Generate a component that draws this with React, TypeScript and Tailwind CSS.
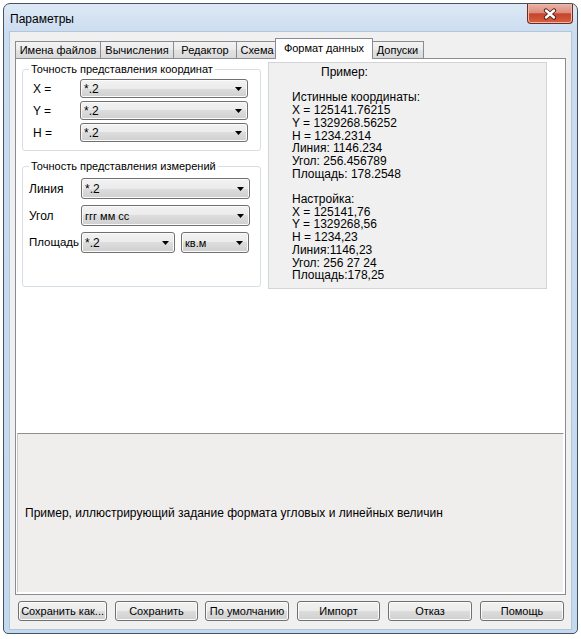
import React from "react";

// Win7-style gradient used by buttons, combos and inactive tabs
const winGrad =
  "bg-[linear-gradient(to_bottom,#f2f2f2_0%,#ebebeb_50%,#dddddd_50%,#cfcfcf_100%)]";

const tabs = [
  { label: "Имена файлов", cls: "w-[86px]" },
  { label: "Вычисления", cls: "w-[74px] -ml-px" },
  { label: "Редактор", cls: "w-[64px] -ml-px" },
  { label: "Схема", cls: "w-[42px] -ml-px" },
  { label: "Формат данных", cls: "w-[98px] -ml-[3px]", active: true },
  { label: "Допуски", cls: "w-[53px] -ml-[2px]" },
];

const sample = [
  "Истинные координаты:",
  "X = 125141.76215",
  "Y = 1329268.56252",
  "H = 1234.2314",
  "Линия: 1146.234",
  "Угол: 256.456789",
  "Площадь: 178.2548",
  "",
  "Настройка:",
  "X = 125141,76",
  "Y = 1329268,56",
  "H = 1234,23",
  "Линия:1146,23",
  "Угол: 256 27 24",
  "Площадь:178,25",
];

const buttons = [
  { label: "Сохранить как...", cls: "ml-[8px] w-[89px] justify-end pr-[2px]" },
  { label: "Сохранить", cls: "ml-[8px] w-[83px] justify-center" },
  { label: "По умолчанию", cls: "ml-[7px] w-[84px] justify-center" },
  { label: "Импорт", cls: "ml-[8px] w-[83px] justify-center" },
  { label: "Отказ", cls: "ml-[8px] w-[84px] justify-center" },
  { label: "Помощь", cls: "ml-[8px] w-[84px] justify-center" },
];

function Arrow() {
  return (
    <svg width="7" height="4" viewBox="0 0 7 4" className="shrink-0">
      <polygon points="0,0 7,0 3.5,4" fill="#000" />
    </svg>
  );
}

function Combo({ value, className }: { value: string; className: string }) {
  return (
    <div
      className={`flex items-center justify-between rounded-[3px] border border-[#707070] pl-[3px] pr-[5px] shadow-[inset_0_0_0_1px_#fbfbfb] ${winGrad} ${className}`}
    >
      <span className="leading-[14px]">{value}</span>
      <Arrow />
    </div>
  );
}

function CloseButton() {
  return (
    <div className="mr-[4px] flex h-[20px] w-[46px] items-center justify-center rounded-b-[4px] border border-t-0 border-[#6e2b22] bg-[linear-gradient(to_bottom,#eab3a6_0%,#dd8d7e_45%,#c7432d_52%,#d4613f_100%)] shadow-[inset_0_0_0_1px_#f0b8a8]">
      <svg width="14" height="12" viewBox="0 0 14 12">
        <path d="M3 2.5 L11 9.5 M11 2.5 L3 9.5" stroke="#4a1c16" strokeWidth="4.2" strokeLinecap="round" />
        <path d="M3 2.5 L11 9.5 M11 2.5 L3 9.5" stroke="#ffffff" strokeWidth="2.4" strokeLinecap="round" />
      </svg>
    </div>
  );
}

export default function App() {
  return (
    <div className="h-[639px] w-[581px] overflow-hidden bg-white pl-[3px] pt-[3px] font-['Liberation_Sans',Arial,sans-serif] text-[12px] text-black">
      <div className="flex h-[631px] w-[575px] flex-col rounded-t-[7px] rounded-b-[5px] border border-[#47525f] bg-[linear-gradient(to_bottom,#dde9f6_0px,#cadcf0_30px,#c3d9f0_100%)]">
        {/* title bar */}
        <div className="flex h-[27px] items-start justify-between">
          <span className="ml-[6px] mt-[8px] leading-[14px]">Параметры</span>
          <CloseButton />
        </div>

        {/* client area */}
        <div className="ml-[5px] flex h-[599px] w-[563px] flex-col border border-[#b4c5d8] bg-[#f0f0f0]">
          {/* tab strip */}
          <div className="ml-[5px] mt-[6px] flex h-[20px] items-end text-[11px]">
            {tabs.map((t) =>
              t.active ? (
                <div
                  key={t.label}
                  className={`relative z-10 -mb-px flex h-[21px] items-start justify-center border border-b-0 border-[#898c95] bg-white pt-[2px] leading-[14px] ${t.cls}`}
                >
                  {t.label}
                </div>
              ) : (
                <div
                  key={t.label}
                  className={`flex h-[17px] items-center justify-center border border-b-0 border-[#898c95] bg-[linear-gradient(to_bottom,#f3f3f3_0%,#ebebeb_50%,#e2e2e2_51%,#dadada_100%)] leading-[14px] ${t.cls}`}
                >
                  {t.label}
                </div>
              )
            )}
          </div>

          {/* tab page */}
          <div className="ml-[5px] flex h-[537px] w-[551px] flex-col border border-[#898c95] bg-white">
            <div className="flex h-[374px] pl-[6px] pt-[3px]">
              <div className="flex w-[239px] flex-col">
                <fieldset className="rounded-[3px] border border-[#d5dfe5] px-[6px] pb-[8px]">
                  <legend className="px-[2px] text-[11px] leading-[15px]">Точность представления координат</legend>
                  <div className="mt-[2px] flex flex-col gap-[3px]">
                    {["X =", "Y =", "H ="].map((l) => (
                      <div key={l} className="flex items-center">
                        <span className="w-[51px] pl-[4px]">{l}</span>
                        <Combo value="*.2" className="h-[19px] w-[168px]" />
                      </div>
                    ))}
                  </div>
                </fieldset>

                <fieldset className="mt-[8px] rounded-[3px] border border-[#d5dfe5] px-[6px] pb-[33px]">
                  <legend className="px-[2px] text-[11px] leading-[15px]">Точность представления измерений</legend>
                  <div className="mt-[4px] flex flex-col gap-[6px]">
                    <div className="flex items-center">
                      <span className="w-[52px]">Линия</span>
                      <Combo value="*.2" className="h-[21px] w-[169px]" />
                    </div>
                    <div className="flex items-center">
                      <span className="w-[52px]">Угол</span>
                      <Combo value="ггг мм сс" className="h-[21px] w-[169px] text-[11px]" />
                    </div>
                    <div className="flex items-center">
                      <span className="w-[52px] text-[11.5px]">Площадь</span>
                      <Combo value="*.2" className="h-[21px] w-[94px]" />
                      <Combo value="кв.м" className="ml-[6px] h-[21px] w-[68px] text-[11px]" />
                    </div>
                  </div>
                </fieldset>
              </div>

              {/* example panel */}
              <div className="ml-[7px] h-[227px] w-[279px] border border-[#d4d4d4] bg-[#f0f0f0] pl-[23px] pt-[3px] leading-[12.7px]">
                <div className="ml-[29px]">Пример:</div>
                <div>&nbsp;</div>
                {sample.map((s, i) => (
                  <div key={i}>{s === "" ? "\u00a0" : s}</div>
                ))}
              </div>
            </div>

            {/* description */}
            <div className="mx-px mb-px flex flex-1 items-center border border-t-[#8f8f8f] border-l-[#c8c8c8] border-r-white border-b-white bg-[#f0eded] pl-[7px]">
              Пример, иллюстрирующий задание формата угловых и линейных величин
            </div>
          </div>

          {/* buttons */}
          <div className="mt-[6px] flex h-[20px] text-[11px]">
            {buttons.map((b) => (
              <div
                key={b.label}
                className={`flex h-[20px] items-center overflow-hidden whitespace-nowrap rounded-[3px] border border-[#707070] shadow-[inset_0_0_0_1px_#fbfbfb] ${winGrad} ${b.cls}`}
              >
                {b.label}
              </div>
            ))}
          </div>
        </div>
      </div>
    </div>
  );
}
